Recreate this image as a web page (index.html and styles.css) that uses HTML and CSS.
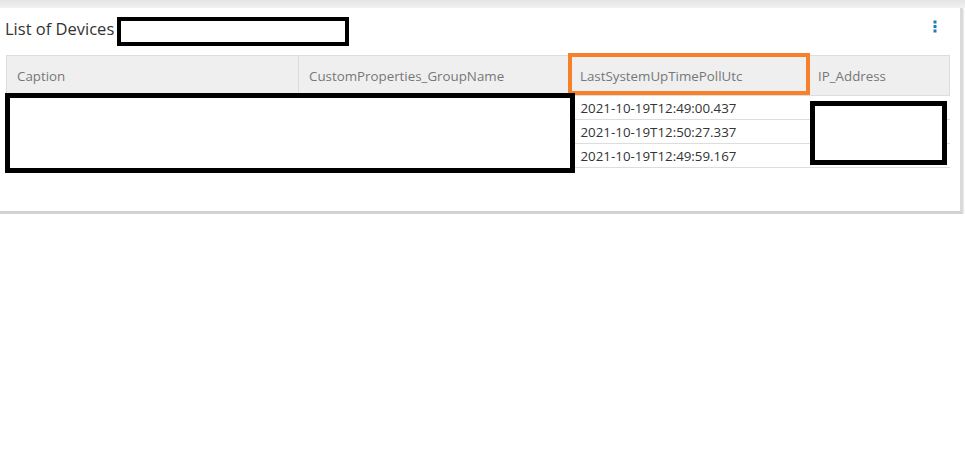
FILE: index.html
```html
<!DOCTYPE html>
<html>
<head>
<meta charset="utf-8">
<link rel="stylesheet" href="styles.css">
</head>
<body>
<div class="topband"></div>
<div class="card">
  <div class="card-head">
    <h2 class="title">List of Devices</h2>
    <span class="redact redact-title"></span>
    <button class="kebab" aria-label="menu">
      <svg width="4" height="13" viewBox="0 0 4 13"><rect x="0.5" y="0.5" width="3" height="3" fill="#1a7fb5"/><rect x="0.5" y="5" width="3" height="3" fill="#1a7fb5"/><rect x="0.5" y="9.5" width="3" height="3" fill="#1a7fb5"/></svg>
    </button>
  </div>
  <table class="grid">
    <colgroup>
      <col class="c1"><col class="c2"><col class="c3"><col class="c4">
    </colgroup>
    <thead>
      <tr><th>Caption</th><th>CustomProperties_GroupName</th><th>LastSystemUpTimePollUtc</th><th>IP_Address</th></tr>
    </thead>
    <tbody>
      <tr><td></td><td></td><td>2021-10-19T12:49:00.437</td><td></td></tr>
      <tr><td></td><td></td><td>2021-10-19T12:50:27.337</td><td></td></tr>
      <tr><td></td><td></td><td>2021-10-19T12:49:59.167</td><td></td></tr>
    </tbody>
  </table>
  <span class="hl hl-col"></span>
  <span class="redact redact-rows"></span>
  <span class="redact redact-ip"></span>
</div>
</body>
</html>
```

FILE: styles.css
```css
html, body {
  margin: 0;
  padding: 0;
  background: #fff;
  font-family: "Open Sans", "Noto Sans", sans-serif;
}
.topband {
  height: 8px;
  background: linear-gradient(#e4e4e4, #f2f2f2);
}
.card {
  position: relative;
  width: 963px;
  height: 206px;
  background: #fff;
  border-right: 3px solid #dadada;
  border-bottom: 3px solid #d2d2d2;
  box-shadow: 1px 1px 1px rgba(0, 0, 0, 0.08);
  box-sizing: border-box;
}
.card-head {
  display: flex;
  align-items: flex-start;
  height: 47px;
  padding: 9px 23px 0 5px;
  box-sizing: border-box;
}
.title {
  margin: 2px 0 0 0;
  font-size: 16.5px;
  font-weight: 400;
  color: #333;
  line-height: 20px;
}
.redact {
  display: inline-block;
  box-sizing: border-box;
  border: 5px solid #000;
  background: #fff;
}
.redact-title {
  width: 232px;
  height: 29px;
  margin-left: 3px;
  border-width: 4px;
}
.kebab {
  margin-left: auto;
  margin-top: 3px;
  background: none;
  border: 0;
  padding: 0;
  width: 4px;
  height: 13px;
  display: flex;
}
.grid {
  margin-left: 6px;
  width: 943px;
  border-collapse: collapse;
  table-layout: fixed;
  font-size: 13.33px;
}
.c1 { width: 292px; }
.c2 { width: 271px; }
.c3 { width: 238px; }
.c4 { width: 142px; }
.grid th {
  height: 40px;
  background: #efefef;
  border: 1px solid #dddddd;
  color: #777;
  font-weight: 400;
  text-align: left;
  padding: 0 10px;
  box-sizing: border-box;
}
.grid td {
  height: 24px;
  padding: 0 11px;
  border-bottom: 1px solid #dddddd;
  color: #333;
  box-sizing: border-box;
}
.hl {
  position: absolute;
  box-sizing: border-box;
  border: 4px solid #f7812a;
}
.hl-col {
  left: 568px;
  top: 45px;
  width: 242px;
  height: 42px;
}
.redact-rows {
  position: absolute;
  left: 5px;
  top: 85px;
  width: 570px;
  height: 80px;
}
.redact-ip {
  position: absolute;
  left: 810px;
  top: 93px;
  width: 137px;
  height: 64px;
}
```
